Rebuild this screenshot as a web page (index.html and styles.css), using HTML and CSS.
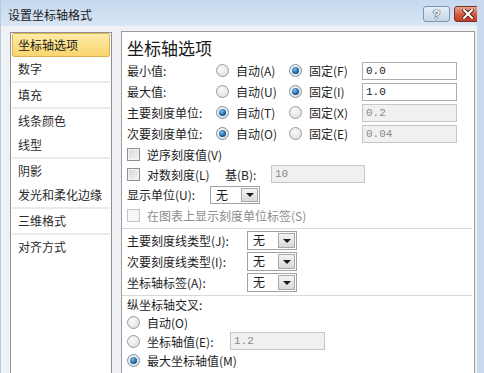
FILE: index.html
```html
<!DOCTYPE html>
<html lang="zh-CN">
<head>
    <meta charset="UTF-8">
    <meta name="viewport" content="width=device-width, initial-scale=1.0">
    <title>设置坐标轴格式</title>
    <link rel="stylesheet" href="styles.css">
</head>
<body>
    <div class="dialog">
        <div class="titlebar">
            <span class="title">设置坐标轴格式</span>
            <div class="caption-buttons">
                <span class="cap-btn help">?</span>
                <span class="cap-btn close">
                    <svg width="12" height="10" viewBox="0 0 12 10">
                        <path d="M2 1 L10 9 M10 1 L2 9" stroke="#5a2418" stroke-width="4" stroke-linecap="square"/>
                        <path d="M2 1 L10 9 M10 1 L2 9" stroke="#ffffff" stroke-width="2" stroke-linecap="square"/>
                    </svg>
                </span>
            </div>
        </div>

        <div class="content">
            <ul class="nav">
                <li class="selected">坐标轴选项</li>
                <li class="group-end">数字</li>
                <li class="group-end">填充</li>
                <li>线条颜色</li>
                <li class="group-end">线型</li>
                <li>阴影</li>
                <li class="group-end">发光和柔化边缘</li>
                <li class="group-end">三维格式</li>
                <li>对齐方式</li>
            </ul>

            <div class="panel">
                <h1>坐标轴选项</h1>

                <div class="bound-row">
                    <span>最小值:</span>
                    <span class="opt"><span class="radio"></span>自动(A)</span>
                    <span class="opt"><span class="radio on"></span>固定(F)</span>
                    <span class="field">0.0</span>
                </div>
                <div class="bound-row">
                    <span>最大值:</span>
                    <span class="opt"><span class="radio"></span>自动(U)</span>
                    <span class="opt"><span class="radio on"></span>固定(I)</span>
                    <span class="field">1.0</span>
                </div>
                <div class="bound-row">
                    <span>主要刻度单位:</span>
                    <span class="opt"><span class="radio on"></span>自动(T)</span>
                    <span class="opt"><span class="radio"></span>固定(X)</span>
                    <span class="field disabled">0.2</span>
                </div>
                <div class="bound-row">
                    <span>次要刻度单位:</span>
                    <span class="opt"><span class="radio on"></span>自动(O)</span>
                    <span class="opt"><span class="radio"></span>固定(E)</span>
                    <span class="field disabled">0.04</span>
                </div>

                <div class="check-row">
                    <span class="checkbox"></span>逆序刻度值(V)
                </div>
                <div class="check-row">
                    <span class="checkbox"></span>
                    <span class="log-label">对数刻度(L)</span>
                    <span class="base-label">基(B):</span>
                    <span class="field disabled">10</span>
                </div>
                <div class="unit-row">
                    <span class="unit-label">显示单位(U):</span>
                    <span class="combo"><span class="value">无</span><span class="arrow"></span></span>
                </div>
                <div class="check-row muted">
                    <span class="checkbox off"></span>在图表上显示刻度单位标签(S)
                </div>

                <div class="rule"></div>

                <div class="tick-row">
                    <span>主要刻度线类型(J):</span>
                    <span class="combo"><span class="value">无</span><span class="arrow"></span></span>
                </div>
                <div class="tick-row">
                    <span>次要刻度线类型(I):</span>
                    <span class="combo"><span class="value">无</span><span class="arrow"></span></span>
                </div>
                <div class="tick-row">
                    <span>坐标轴标签(A):</span>
                    <span class="combo"><span class="value">无</span><span class="arrow"></span></span>
                </div>

                <div class="rule"></div>

                <div class="cross-title">纵坐标轴交叉:</div>
                <div class="cross-row">
                    <span class="radio"></span>自动(O)
                </div>
                <div class="cross-row tall">
                    <span class="radio"></span>
                    <span class="cross-label">坐标轴值(E):</span>
                    <span class="field disabled">1.2</span>
                </div>
                <div class="cross-row">
                    <span class="radio on"></span>最大坐标轴值(M)
                </div>
            </div>
        </div>
    </div>
</body>
</html>
```

FILE: styles.css
```css
body {
    margin: 0;
    font-family: "Noto Sans CJK SC", "Noto Sans", sans-serif;
    font-size: 12px;
    color: #1e1e1e;
}
.dialog {
    width: 484px;
    height: 373px;
    overflow: hidden;
    box-sizing: border-box;
    border-right: 7px solid #c9daee;
    border-left: 1px solid #b9c9dc;
    background-color: #eff1f5;
}
.titlebar {
    height: 26px;
    display: flex;
    justify-content: space-between;
    align-items: center;
    padding: 0 0 0 7px;
    background: linear-gradient(#c6d8ee, #d8e5f4);
}
.title {
    font-size: 12px;
    color: #1a1a1a;
    padding-top: 2px;
}
.caption-buttons {
    display: flex;
    gap: 4px;
    padding-top: 2px;
    margin-right: -5px;
}
.cap-btn {
    display: flex;
    align-items: center;
    justify-content: center;
    height: 16px;
    box-sizing: border-box;
    border-radius: 3px;
}
.help {
    width: 27px;
    border: 1px solid #8094ae;
    background: linear-gradient(#e6eef8, #c7d6ea);
    color: #ffffff;
    font-family: "Liberation Sans", sans-serif;
    font-weight: bold;
    font-size: 13px;
    text-shadow: 0 0 1px #2d3c55, 0 0 1px #2d3c55, 0 0 1px #2d3c55;
}
.close {
    width: 28px;
    border: 1px solid #7a3427;
    background: linear-gradient(#e8a593, #d2573d 55%, #c23f23);
}
.content {
    display: flex;
    gap: 9px;
    padding: 5px 2px 0 9px;
    height: 400px;
}
.nav {
    list-style: none;
    margin: 1px 0 0 0;
    padding: 0 1px;
    width: 98px;
    border: 1px solid #8e8f90;
    background-color: #ffffff;
}
.nav li {
    height: 24px;
    line-height: 24px;
    padding-left: 6px;
    color: #2b2b2b;
    white-space: nowrap;
}
.nav li.group-end {
    border-bottom: 2px solid #ebebeb;
}
.nav li.selected {
    box-sizing: border-box;
    line-height: 22px;
    padding-left: 5px;
    border: 1px solid #dfb250;
    border-radius: 2px;
    background: linear-gradient(#fdeba9, #fbd56c);
    color: #1a1a1a;
}
.panel {
    flex: 1;
    background-color: #ffffff;
    border: 1px solid #9c9c9c;
    padding: 4px 0 0 5px;
}
.panel h1 {
    margin: 0;
    font-size: 17px;
    font-weight: normal;
    line-height: 24px;
    height: 24px;
    color: #1a1a1a;
}
.bound-row {
    display: grid;
    grid-template-columns: 89px 73px 73px 95px;
    align-items: center;
    height: 21px;
}
.opt {
    display: flex;
    align-items: center;
    gap: 7px;
}
.radio {
    display: inline-block;
    position: relative;
    flex: none;
    width: 13px;
    height: 13px;
    box-sizing: border-box;
    border-radius: 50%;
    border: 1px solid #9a9a9a;
    background: radial-gradient(circle at 40% 35%, #fbfbfb, #d9d9d9);
}
.radio.on {
    border-color: #7b8fa6;
}
.radio.on::after {
    content: "";
    position: absolute;
    left: 2px;
    top: 2px;
    width: 7px;
    height: 7px;
    border-radius: 50%;
    background: radial-gradient(circle at 40% 35%, #7fc0f2, #1c5d9a 60%, #0e3a66);
}
.field {
    display: block;
    height: 18px;
    box-sizing: border-box;
    border: 1px solid #a9acb2;
    background-color: #ffffff;
    padding-left: 3px;
    font-family: "Liberation Mono", monospace;
    font-size: 11px;
    line-height: 16px;
    color: #1a1a1a;
}
.field.disabled {
    border-color: #c6c6c6;
    background-color: #f0f0f0;
    color: #8a8a8a;
}
.check-row {
    display: flex;
    align-items: center;
    gap: 7px;
    height: 20px;
}
.check-row.muted {
    color: #8d8d8d;
}
.checkbox {
    display: inline-block;
    flex: none;
    width: 13px;
    height: 13px;
    box-sizing: border-box;
    border: 1px solid #8f8f8f;
    background: linear-gradient(135deg, #d6d6d6, #f6f6f6);
    box-shadow: inset 0 0 0 1px #f4f4f4;
}
.checkbox.off {
    border-color: #c4c4c4;
    background: #f7f7f7;
}
.log-label {
    width: 71px;
}
.base-label {
    width: 39px;
}
.check-row .field {
    width: 94px;
}
.unit-row {
    display: flex;
    align-items: center;
    height: 21px;
}
.unit-label {
    width: 83px;
}
.combo {
    display: flex;
    width: 50px;
    height: 18px;
    box-sizing: border-box;
    border: 1px solid #9fa2a8;
    background-color: #ffffff;
}
.combo .value {
    flex: 1;
    padding-left: 5px;
    line-height: 16px;
}
.combo .arrow {
    width: 17px;
    margin: 1px;
    box-sizing: border-box;
    border: 1px solid #a8a8a8;
    background: linear-gradient(#f4f4f4, #d9d9d9);
    display: flex;
    align-items: center;
    justify-content: center;
}
.combo .arrow::after {
    content: "";
    border-left: 4px solid transparent;
    border-right: 4px solid transparent;
    border-top: 4px solid #1a1a1a;
    margin-top: 1px;
}
.rule {
    margin: 3px 2px 0 -5px;
    border-top: 1px solid #d8d8d8;
    border-bottom: 1px solid #ffffff;
}
.tick-row {
    display: grid;
    grid-template-columns: 120px 50px;
    align-items: center;
    height: 21px;
}
.tick-row .combo {
    height: 19px;
}
.tick-row + .rule {
    margin-top: 2px;
}
.cross-title {
    height: 16px;
    line-height: 16px;
}
.cross-row {
    display: flex;
    align-items: center;
    gap: 7px;
    height: 18px;
}
.cross-row.tall {
    height: 20px;
}
.cross-label {
    width: 76px;
}
.cross-row .field {
    width: 95px;
}
```
